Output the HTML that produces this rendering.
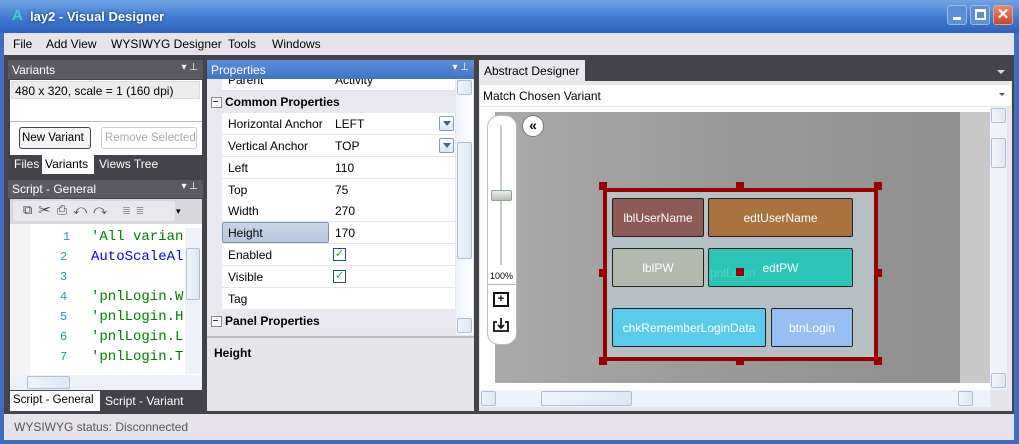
<!DOCTYPE html>
<html><head><meta charset="utf-8"><style>
*{box-sizing:border-box;margin:0;padding:0;white-space:nowrap}
body{width:1019px;height:444px;overflow:hidden;font-family:"Liberation Sans",sans-serif;font-size:12px;background:#3f6fc0;position:relative}
.a{position:absolute}
.hdr{color:#fff;font-size:12px;padding:3px 4px}
.mono{font-family:"Liberation Mono",monospace;font-size:14px}
.row{position:absolute;left:15px;width:233px;height:22px;border-bottom:1px solid #e6e6ea;background:#fff}
.row span{position:absolute;top:4px}
.row .k{left:6px}.row .v{left:113px}
.cat{position:absolute;left:0;width:249px;height:22px;background:#e9e8ee;font-weight:bold;padding:4px 0 0 18px}
.cat:before{content:"";position:absolute;left:4px;top:6px;width:9px;height:9px;border:1px solid #888;background:#fff}
.cat:after{content:"";position:absolute;left:6px;top:10px;width:5px;height:1px;background:#333}
.dd{position:absolute;left:233px;width:15px;height:15px;border:1px solid #7f9db9;border-radius:2px;background:linear-gradient(#fff,#dbe5f3)}
.dd:after{content:"";position:absolute;left:3px;top:4px;border:4px solid transparent;border-top:5px solid #4d6185}
.cb{position:absolute;left:111px;width:13px;height:13px;border:1px solid #1c5180;background:#fff;color:#21a121;font-size:11px;line-height:11px;text-align:center}
.comp{position:absolute;border:1px solid #222;border-radius:2px;color:#fff;font-size:12px;display:flex;align-items:center;justify-content:center;overflow:hidden}
.h{position:absolute;width:8px;height:8px;background:#990000}
.sb{position:absolute;background:linear-gradient(90deg,#f0f4fa,#dfe8f4);border:1px solid #b0bfd6;border-radius:2px}
</style></head><body>
<div class="a" style="left:0;top:0;width:1019px;height:33px;background:linear-gradient(#6fa2e4,#3d76d0 60%,#2f63b8)"></div>
<div class="a" style="left:12px;top:7px;color:#3fd1c0;font-weight:bold;font-size:15px">A</div>
<div class="a" style="left:30px;top:9px;color:#fff;font-weight:bold;font-size:13px;text-shadow:0 0 3px #103070">lay2 - Visual Designer</div>
<div class="a" style="left:947px;top:5px;width:20px;height:20px;border:1px solid #9cb9e8;border-radius:3px;background:#5d8ed6"><div class="a" style="left:5px;top:11px;width:8px;height:3px;background:#fff"></div></div>
<div class="a" style="left:970px;top:5px;width:20px;height:20px;border:1px solid #9cb9e8;border-radius:3px;background:#5d8ed6"><div class="a" style="left:4px;top:3px;width:11px;height:11px;border:2px solid #fff;border-top-width:3px"></div></div>
<div class="a" style="left:993px;top:5px;width:20px;height:20px;border:1px solid #e8a090;border-radius:3px;background:linear-gradient(#e88a70,#c8452a);color:#fff;font-weight:bold;font-size:15px;text-align:center;line-height:18px">✕</div>
<div class="a" style="left:4px;top:33px;width:1010px;height:407px;background:#45434a"></div>
<div class="a" style="left:4px;top:33px;width:1010px;height:22px;background:#e6e4ea;font-size:12px">
<span class="a" style="left:9px;top:4px">File</span><span class="a" style="left:42px;top:4px">Add View</span><span class="a" style="left:107px;top:4px">WYSIWYG Designer</span><span class="a" style="left:224px;top:4px">Tools</span><span class="a" style="left:268px;top:4px">Windows</span></div>
<div class="a hdr" style="left:8px;top:60px;width:195px;height:19px;background:#5b5a62">Variants<span class="a" style="right:5px;top:2px;font-size:10px">▾ ⊥</span></div>
<div class="a" style="left:10px;top:80px;width:192px;height:75px;background:#fff"></div>
<div class="a" style="left:11px;top:81px;width:189px;height:18px;background:#ececec;border:1px solid #ddd;padding:2px 3px">480 x 320, scale = 1 (160 dpi)</div>
<div class="a" style="left:10px;top:121px;width:192px;height:34px;background:#fff;border-top:1px solid #bbb"></div>
<div class="a" style="left:19px;top:127px;width:72px;height:22px;border:1px solid #445;border-radius:3px;background:#f4f4f4;padding:4px 2px;font-size:11.5px">New Variant</div>
<div class="a" style="left:101px;top:127px;width:96px;height:22px;border:1px solid #ccc;border-radius:3px;background:#fff;padding:4px 3px;color:#aaa;font-size:11.5px;overflow:hidden">Remove Selected</div>
<div class="a" style="left:14px;top:157px;color:#fff">Files</div>
<div class="a" style="left:42px;top:155px;width:52px;height:19px;background:#fff;padding:2px 3px">Variants</div>
<div class="a" style="left:99px;top:157px;color:#fff">Views Tree</div>
<div class="a hdr" style="left:8px;top:180px;width:195px;height:18px;background:#5b5a62;padding-top:2px">Script - General<span class="a" style="right:5px;top:1px;font-size:10px">▾ ⊥</span></div>
<div class="a" style="left:10px;top:199px;width:192px;height:25px;background:#d8d7dc"></div>
<div class="a" style="left:13px;top:201px;width:162px;height:20px;background:#e9e8ed;border-radius:3px;color:#444;font-size:13px;letter-spacing:6px;padding:1px 0 0 10px">⧉✂⎙↶↷ ≣≣</div>
<div class="a" style="left:176px;top:206px;font-size:9px">▾</div>
<div class="a" style="left:10px;top:224px;width:192px;height:151px;background:#fff"></div>
<div class="a" style="left:10px;top:224px;width:20px;height:151px;background:#f4f4f4"></div>
<div class="a mono" style="left:30px;top:227px;width:154px;height:148px;overflow:hidden;line-height:20px">
<div style="position:relative;height:20px"><span style="color:#2b91af;font-size:12px;position:absolute;left:33px">1</span><span style="color:#008000;position:absolute;left:61px">'All variants</span></div>
<div style="position:relative;height:20px"><span style="color:#2b91af;font-size:12px;position:absolute;left:30px">2</span><span style="color:#00f;position:absolute;left:61px">AutoScaleAll</span></div>
<div style="position:relative;height:20px"><span style="color:#2b91af;font-size:12px;position:absolute;left:30px">3</span></div>
<div style="position:relative;height:20px"><span style="color:#2b91af;font-size:12px;position:absolute;left:30px">4</span><span style="color:#008000;position:absolute;left:61px">'pnlLogin.W</span></div>
<div style="position:relative;height:20px"><span style="color:#2b91af;font-size:12px;position:absolute;left:30px">5</span><span style="color:#008000;position:absolute;left:61px">'pnlLogin.H</span></div>
<div style="position:relative;height:20px"><span style="color:#2b91af;font-size:12px;position:absolute;left:30px">6</span><span style="color:#008000;position:absolute;left:61px">'pnlLogin.L</span></div>
<div style="position:relative;height:20px"><span style="color:#2b91af;font-size:12px;position:absolute;left:30px">7</span><span style="color:#008000;position:absolute;left:61px">'pnlLogin.T</span></div>
</div>
<div class="a" style="left:185px;top:228px;width:16px;height:146px;background:#eef2f8"></div>
<div class="sb" style="left:186px;top:248px;width:14px;height:52px"></div>
<div class="a" style="left:10px;top:375px;width:192px;height:15px;background:#eef2f8"></div>
<div class="sb" style="left:27px;top:376px;width:43px;height:13px"></div>
<div class="a" style="left:10px;top:391px;width:90px;height:20px;background:#fff;padding:3px 3px;font-size:11.5px">Script - General</div>
<div class="a" style="left:105px;top:394px;color:#fff">Script - Variant</div>
<div class="a hdr" style="left:207px;top:60px;width:267px;height:19px;background:linear-gradient(#5b8fd8,#3f73c6)">Properties<span class="a" style="right:5px;top:2px;font-size:10px">▾ ⊥</span></div>
<div class="a" style="left:207px;top:79px;width:267px;height:332px;background:#e6e5ea"></div>
<div class="a" style="left:207px;top:79px;width:249px;height:256px;overflow:hidden;background:#e9e8ee">
<div class="row" style="top:-10px"><span class="k">Parent</span><span class="v">Activity</span></div>
<div class="cat" style="top:12px">Common Properties</div>
<div class="row" style="top:34px"><span class="k">Horizontal Anchor</span><span class="v">LEFT</span><div class="dd" style="top:3px;left:217px"></div></div>
<div class="row" style="top:56px"><span class="k">Vertical Anchor</span><span class="v">TOP</span><div class="dd" style="top:3px;left:217px"></div></div>
<div class="row" style="top:78px"><span class="k">Left</span><span class="v">110</span></div>
<div class="row" style="top:100px"><span class="k">Top</span><span class="v">75</span></div>
<div class="row" style="top:121px"><span class="k">Width</span><span class="v">270</span></div>
<div class="row" style="top:143px"><div class="a" style="left:0;top:0;width:107px;height:21px;background:linear-gradient(#c9d5e6,#b7c7de);border:1px solid #7e93b4;border-radius:2px"></div><span class="k">Height</span><span class="v">170</span></div>
<div class="row" style="top:165px"><span class="k">Enabled</span><div class="cb" style="top:4px">✓</div></div>
<div class="row" style="top:187px"><span class="k">Visible</span><div class="cb" style="top:4px">✓</div></div>
<div class="row" style="top:209px"><span class="k">Tag</span></div>
<div class="cat" style="top:231px">Panel Properties</div>
</div>
<div class="a" style="left:456px;top:79px;width:17px;height:256px;background:linear-gradient(90deg,#eef3fb,#fff)"></div>
<div class="sb" style="left:457px;top:80px;width:15px;height:15px"></div>
<div class="sb" style="left:457px;top:142px;width:15px;height:117px"></div>
<div class="sb" style="left:457px;top:318px;width:15px;height:15px"></div>
<div class="a" style="left:207px;top:336px;width:267px;height:2px;background:#bbb"></div>
<div class="a" style="left:214px;top:346px;font-weight:bold">Height</div>
<div class="a" style="left:479px;top:60px;width:106px;height:21px;background:#e9e8ee;padding:4px 5px">Abstract Designer</div>
<div class="a" style="left:997px;top:70px;border:4px solid transparent;border-top:4px solid #ddd"></div>
<div class="a" style="left:479px;top:81px;width:533px;height:330px;background:#e6e5ea"></div>
<div class="a" style="left:480px;top:85px;width:531px;height:21px;background:#fff;padding:4px 3px">Match Chosen Variant</div>
<div class="a" style="left:999px;top:93px;border:3px solid transparent;border-top:3px solid #555"></div>
<div class="a" style="left:480px;top:107px;width:510px;height:283px;background:#fff"></div>
<div class="a" style="left:495px;top:112px;width:465px;height:271px;background:linear-gradient(90deg,#aaa,#999 50%,#8f8f8f)"></div>
<div class="a" style="left:960px;top:112px;width:30px;height:271px;background:#c8c8c8"></div>
<div class="a" style="left:487px;top:115px;width:30px;height:230px;background:#fff;border:1px solid #bbb;border-radius:12px"></div>
<div class="a" style="left:500px;top:125px;width:2px;height:140px;background:#ccc"></div>
<div class="a" style="left:491px;top:190px;width:21px;height:11px;background:linear-gradient(#eee,#bbb);border:1px solid #8a8;border-radius:2px"></div>
<div class="a" style="left:490px;top:271px;font-size:9px">100%</div>
<div class="a" style="left:488px;top:284px;width:28px;height:1px;background:#bbb"></div>
<div class="a" style="left:493px;top:292px;width:16px;height:15px;border:2px solid #111;font-size:11px;line-height:11px;text-align:center;font-weight:bold">+</div>
<svg class="a" style="left:492px;top:317px" width="18" height="16" viewBox="0 0 18 16"><path d="M5 5H2v9h14V5h-3M9 1v10M6 8l3 3 3-3" fill="none" stroke="#111" stroke-width="1.8"/></svg>
<div class="a" style="left:522px;top:115px;width:22px;height:22px;border-radius:50%;background:#fff;border:1px solid #777;text-align:center;font-weight:bold;font-size:14px;line-height:19px">«</div>
<div class="a" style="left:603px;top:188px;width:275px;height:173px;background:#b4c0c3;border:4px solid #990000"></div>
<div class="comp" style="left:612px;top:198px;width:92px;height:39px;background:#8d5b55">lblUserName</div>
<div class="comp" style="left:708px;top:198px;width:145px;height:39px;background:#a8733f">edtUserName</div>
<div class="comp" style="left:612px;top:248px;width:92px;height:39px;background:#b0bbae">lblPW</div>
<div class="comp" style="left:708px;top:248px;width:145px;height:39px;background:#2bc4b6">edtPW</div>
<div class="a" style="left:710px;top:266px;color:#4ad4c6;font-size:12px">pnlLogin</div>
<div class="comp" style="left:612px;top:308px;width:154px;height:39px;background:#5bcbec">chkRememberLoginData</div>
<div class="comp" style="left:771px;top:308px;width:82px;height:39px;background:#97bff1">btnLogin</div>
<div class="h" style="left:599px;top:182px"></div><div class="h" style="left:736px;top:182px"></div><div class="h" style="left:874px;top:182px"></div>
<div class="h" style="left:599px;top:269px"></div><div class="h" style="left:736px;top:268px"></div><div class="h" style="left:874px;top:269px"></div>
<div class="h" style="left:599px;top:357px"></div><div class="h" style="left:736px;top:357px"></div><div class="h" style="left:874px;top:357px"></div>
<div class="a" style="left:990px;top:107px;width:17px;height:283px;background:#eef3fb"></div>
<div class="sb" style="left:991px;top:108px;width:15px;height:15px"></div>
<div class="sb" style="left:991px;top:138px;width:15px;height:30px"></div>
<div class="sb" style="left:991px;top:373px;width:15px;height:15px"></div>
<div class="a" style="left:480px;top:390px;width:510px;height:17px;background:#eef3fb"></div>
<div class="sb" style="left:481px;top:391px;width:15px;height:15px"></div>
<div class="sb" style="left:541px;top:391px;width:91px;height:15px"></div>
<div class="sb" style="left:958px;top:391px;width:15px;height:15px"></div>
<div class="a" style="left:4px;top:414px;width:1010px;height:26px;background:#e6e4ea;color:#555;padding:6px 10px">WYSIWYG status: Disconnected</div>
</body></html>
